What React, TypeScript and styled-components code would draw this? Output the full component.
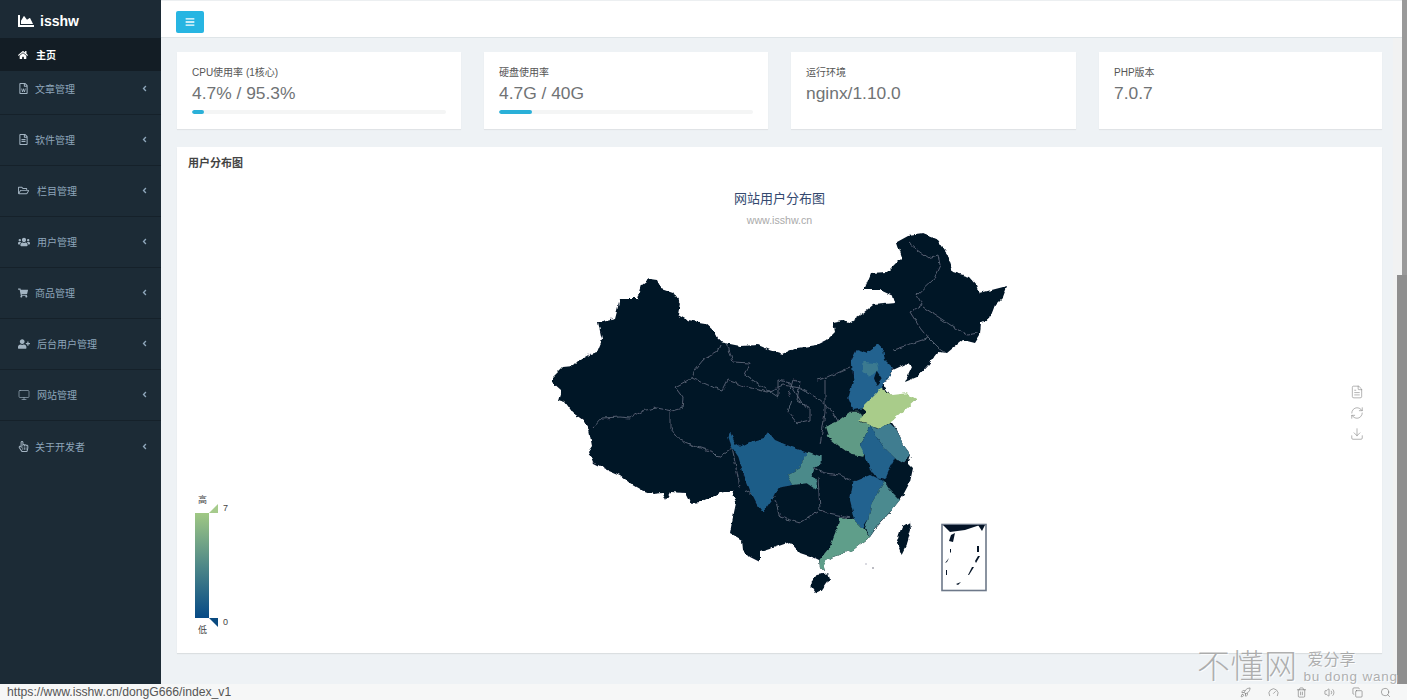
import React from 'react';
import styled, { createGlobalStyle } from 'styled-components';
import {
  FaAngleLeft,
  FaBars,
  FaChartArea,
  FaHome,
  FaRegFileAlt,
  FaRegFileWord,
  FaRegFolderOpen,
  FaRegHandPointer,
  FaShoppingCart,
  FaUserPlus,
  FaUsers,
} from 'react-icons/fa';
import {
  Copy,
  Download,
  FileText,
  Gauge,
  Monitor,
  RefreshCw,
  Rocket,
  Search,
  Trash2,
  Volume2,
} from 'lucide-react';

const GlobalStyle = createGlobalStyle`
  html, body {
    margin: 0;
    padding: 0;
    overflow: hidden;
    background: #eef2f5;
    font-family: "Liberation Sans", "Noto Sans CJK SC", sans-serif;
  }
`;

const Page = styled.div`
  position: relative;
  width: 1407px;
  height: 700px;
  display: flex;
  flex-direction: column;
  overflow: hidden;
`;

const Body = styled.div`
  height: 684px;
  display: flex;
`;

const Sidebar = styled.aside`
  width: 161px;
  flex-shrink: 0;
  background: #1c2b36;
`;

const Brand = styled.div`
  height: 38px;
  box-sizing: border-box;
  padding: 3px 0 0 18px;
  display: flex;
  align-items: center;
  gap: 6px;
  color: #fff;
  font-size: 14px;
  font-weight: bold;
  background: #1c2a35;
`;

const HomeItem = styled.div`
  height: 33px;
  padding-left: 18px;
  display: flex;
  align-items: center;
  gap: 8px;
  background: #131d25;
  color: #fff;
  font-size: 10px;
  font-weight: bold;
`;

const MenuItem = styled.div<{ $last?: boolean }>`
  height: 51px;
  box-sizing: border-box;
  padding: 0 12px 1px 18px;
  display: flex;
  align-items: center;
  color: #8ea6ba;
  font-size: 10px;
  border-bottom: ${(p) => (p.$last ? 'none' : '1px solid #15212a')};

  &:first-of-type {
    height: 44px;
    padding-bottom: 8px;
  }
`;

const MenuIcon = styled.span<{ $width: number }>`
  width: ${(p) => p.$width}px;
  flex-shrink: 0;
  display: flex;
  align-items: center;
  color: #a3b4c2;
`;

const MenuLabel = styled.span`
  flex: 1;
`;

const Main = styled.main`
  flex: 1;
  display: flex;
  flex-direction: column;
  min-width: 0;
`;

const TopBar = styled.header`
  height: 38px;
  box-sizing: border-box;
  padding: 5px 0 0 15px;
  display: flex;
  align-items: center;
  background: #fff;
  border-top: 1px solid #eceff1;
  border-bottom: 1px solid #dfe5e8;
`;

const MenuButton = styled.button`
  width: 28px;
  height: 22px;
  padding: 0;
  border: none;
  border-radius: 2px;
  display: flex;
  align-items: center;
  justify-content: center;
  background: #27b5e2;
  color: #fff;
`;

const Content = styled.div`
  flex: 1;
  padding: 14px 20px 0 16px;
  display: flex;
  flex-direction: column;
  gap: 18px;
`;

const StatGrid = styled.div`
  display: grid;
  grid-template-columns: 284px 284px 285px 283px;
  gap: 23px;
`;

const StatCard = styled.section`
  height: 77px;
  box-sizing: border-box;
  padding: 14px 15px 0;
  background: #fff;
  box-shadow: 0 1px 1px rgba(0, 0, 0, 0.06);
`;

const StatTitle = styled.div`
  font-size: 10px;
  line-height: 13px;
  color: #555;
`;

const StatValue = styled.div`
  margin-top: 3px;
  font-size: 17.4px;
  line-height: 22px;
  color: #707375;
`;

const Progress = styled.div`
  margin-top: 6px;
  width: 254px;
  height: 4px;
  border-radius: 2px;
  background: #f4f5f5;
  overflow: hidden;
`;

const ProgressFill = styled.div`
  height: 100%;
  border-radius: 2px;
  background: #2ab0d8;
`;

const MapCard = styled.section`
  position: relative;
  height: 506px;
  box-sizing: border-box;
  padding: 9px 11px 0;
  background: #fff;
  box-shadow: 0 1px 1px rgba(0, 0, 0, 0.08);
`;

const CardHeading = styled.h2`
  margin: 0;
  font-size: 11px;
  line-height: 14px;
  font-weight: bold;
  color: #444;
`;

const ChartTitle = styled.div`
  margin-top: 20px;
  text-align: center;
  font-size: 13px;
  line-height: 18px;
  color: #34496f;
`;

const ChartSubtitle = styled.div`
  margin-top: 6px;
  text-align: center;
  font-size: 10.6px;
  line-height: 12px;
  color: #aaa;
`;

const MapSvg = styled.svg`
  position: absolute;
  left: 363px;
  top: 78px;
`;

const LegendBar = styled.div`
  position: absolute;
  left: 18px;
  top: 366px;
  width: 14px;
  height: 105px;
  background: linear-gradient(#a0c884, #4c8688 52%, #064a86);
`;

const LegendHandle = styled.svg<{ $top: number }>`
  position: absolute;
  left: 32px;
  top: ${(p) => p.$top}px;
`;

const LegendText = styled.span<{ $left: number; $top: number }>`
  position: absolute;
  left: ${(p) => p.$left}px;
  top: ${(p) => p.$top}px;
  font-size: 9px;
  line-height: 12px;
  color: #444;
`;

const Toolbox = styled.div`
  position: absolute;
  left: 1173px;
  top: 238px;
  display: flex;
  flex-direction: column;
  gap: 7px;
  color: #7f7f7f;
`;

const ScrollRail = styled.div`
  width: 5px;
  flex-shrink: 0;
  background: #9a9a9a;
`;

const ScrollTrack = styled.div`
  position: absolute;
  left: 1393px;
  top: 38px;
  width: 9px;
  height: 646px;
  background: #f1f2f2;
`;

const ScrollThumb = styled.div`
  position: absolute;
  left: 1397px;
  top: 275px;
  width: 10px;
  height: 409px;
  background: #8f8f8f;
`;

const StatusBar = styled.footer`
  height: 16px;
  position: relative;
  z-index: 2;
  padding: 0 16px 0 7px;
  display: flex;
  align-items: center;
  justify-content: space-between;
  background: #f6f7f7;
  color: #555;
  font-size: 12.2px;
`;

const StatusIcons = styled.div`
  display: flex;
  gap: 17px;
  color: #666;
`;

const Watermark = styled.div`
  position: absolute;
  left: 1197px;
  top: 647px;
  width: 205px;
  z-index: 3;
  display: flex;
  gap: 6px;
  color: rgba(150, 150, 150, 0.75);
  text-shadow: 1px 1px 0 rgba(255, 255, 255, 0.8);
  pointer-events: none;
`;

const WatermarkMain = styled.span`
  flex-shrink: 0;
  font-size: 33px;
  line-height: 40px;
  font-weight: 300;
  letter-spacing: 0.5px;
  white-space: nowrap;
`;

const WatermarkSide = styled.div`
  display: flex;
  flex-direction: column;
  padding-top: 4px;
`;

const WatermarkSlogan = styled.span`
  font-size: 16px;
  line-height: 18px;
  padding-left: 4px;
  white-space: nowrap;
`;

const WatermarkPinyin = styled.span`
  font-size: 13.5px;
  line-height: 15px;
  letter-spacing: 0.8px;
  white-space: nowrap;
`;

const menu = [
  { label: '文章管理', icon: <FaRegFileWord size={11} />, width: 17 },
  { label: '软件管理', icon: <FaRegFileAlt size={11} />, width: 17 },
  { label: '栏目管理', icon: <FaRegFolderOpen size={11} />, width: 19 },
  { label: '用户管理', icon: <FaUsers size={12} />, width: 19 },
  { label: '商品管理', icon: <FaShoppingCart size={10} />, width: 17 },
  { label: '后台用户管理', icon: <FaUserPlus size={12} />, width: 19 },
  { label: '网站管理', icon: <Monitor size={12} strokeWidth={1.3} />, width: 19 },
  { label: '关于开发者', icon: <FaRegHandPointer size={11} />, width: 17 },
];

const stats = [
  { title: 'CPU使用率 (1核心)', value: '4.7% / 95.3%', fill: 12 },
  { title: '硬盘使用率', value: '4.7G / 40G', fill: 33 },
  { title: '运行环境', value: 'nginx/1.10.0' },
  { title: 'PHP版本', value: '7.0.7' },
];

const OUTLINE =
  '552,378 563,367 573,366 578,361 590,354 597,352 602,340 598,322 615,318 620,299 638,299 642,285 650,279 657,280 661,288 673,292 680,303 678,315 687,320 705,323 715,332 720,342 740,346 758,345 770,350 783,354 797,348 817,345 827,340 835,332 833,322 843,320 848,323 863,313 873,305 895,303 893,296 880,290 864,290 871,273 887,272 902,257 897,242 908,236 923,234 938,240 947,253 953,272 970,277 977,285 980,293 1007,286 1003,297 995,305 990,318 981,322 980,335 975,343 963,340 953,348 947,353 938,352 928,365 917,377 905,382 912,367 908,363 893,370 887,380 882,382 887,390 892,397 907,395 916,400 903,408 890,420 897,430 905,447 911,455 908,463 913,468 910,482 902,497 892,510 877,527 870,537 853,550 833,557 823,563 825,572 820,567 819,560 815,558 800,553 790,542 773,548 760,552 760,562 750,557 743,550 742,540 730,533 732,522 736,503 732,490 720,493 700,502 690,503 685,493 670,492 666,500 663,493 653,494 642,490 630,483 620,475 608,470 598,465 592,462 588,452 592,446 589,430 583,420 573,413 565,402 558,400 561,390 552,382';

// provinces that carry a value, traced at 3x with the origin at (700, 340)
const provinces = [
  { fill: '#1f5d88', points: '90,275 105,310 120,320 150,305 190,295 205,275 225,300 260,315 300,330 325,340 310,360 300,385 262,405 280,435 250,440 232,445 215,480 190,515 170,490 150,450 130,400 115,350 95,320 85,290' },
  { fill: '#4b8a8a', points: '325,335 365,350 365,370 340,385 335,405 350,425 350,450 320,430 280,435 262,405 300,385 310,360' },
  { fill: '#5f9a85', points: '450,215 480,215 490,235 480,245 510,255 490,300 480,315 495,335 490,350 455,345 420,320 385,290 375,260 410,245' },
  { fill: '#21628f', points: '470,30 500,40 535,15 550,30 555,60 580,85 565,115 545,130 548,148 490,205 460,210 445,175 460,120 455,60' },
  { fill: '#3a7a90', points: '490,65 530,70 535,90 510,110 490,95' },
  { fill: '#051427', points: '530,92 545,115 530,135 522,115' },
  { fill: '#a9cc8a', points: '545,145 575,165 620,160 650,178 615,210 580,240 545,265 510,255 478,242 497,215 485,205' },
  { fill: '#3f7d90', points: '510,255 540,265 570,250 590,270 615,320 632,345 610,370 585,355 550,320 530,290' },
  { fill: '#22628c', points: '510,255 530,290 550,320 585,355 570,385 555,420 530,415 510,385 490,335 480,315 490,300' },
  { fill: '#21628f', points: '510,405 530,415 552,425 515,490 505,540 490,565 465,540 450,480 460,425' },
  { fill: '#4b8a8f', points: '570,450 600,480 575,510 530,560 510,590 495,565 505,540 515,490 552,425' },
  { fill: '#5f9e8a', points: '420,535 465,540 490,565 510,590 460,630 400,650 370,670 375,695 360,680 358,660 390,620 410,570' },
];

const islands = [
  '335,725 350,705 385,700 390,715 365,750 345,760 335,745',
  '605,560 630,545 633,570 620,615 605,645 590,605',
];

const borders = [
  '720,345 717,352 703,360 695,370 692,378 675,387 683,398 682,408 672,411',
  '672,411 657,408 645,410 630,418 620,417 602,418 593,428',
  '670,412 670,428 680,440 697,447 713,452 718,457 732,448 740,487',
  '692,378 707,385 722,390 727,380 747,387 767,392 783,385 800,388 817,398 833,412 840,425 830,430',
  '727,343 733,362 750,363 745,375 763,387 778,397 778,380 790,383 800,400 808,410',
  '788,397 793,380 800,382 797,400 810,408 810,420 797,423 788,412 792,400',
  '817,380 827,377 850,367',
  '825,380 825,413 820,445',
  '813,468 825,473 840,475 850,480',
  '818,477 820,510 828,513 850,517 840,518',
  '775,500 780,517 800,523 818,512',
  '745,490 760,500 775,497',
  '908,242 917,250 928,258 938,255 940,265 933,280 917,295 922,305 910,312 920,328 928,338 893,350',
  '923,307 940,318 955,328 967,335 978,333',
  '928,338 938,348 945,353',
];

const MapDrawing: React.FC = () => (
  <MapSvg width="480" height="380" viewBox="540 225 480 380">
    <defs>
      {/* roughens the hand traced coast and province lines */}
      <filter id="rough" x="-5%" y="-5%" width="110%" height="110%">
        <feTurbulence type="fractalNoise" baseFrequency="0.16" numOctaves="2" seed="4" />
        <feDisplacementMap in="SourceGraphic" scale="4.5" xChannelSelector="R" yChannelSelector="G" />
      </filter>
    </defs>
    <g filter="url(#rough)">
      <polygon points={OUTLINE} fill="#051427" />
      <g fill="none" stroke="#5a6877" strokeWidth="0.9">
        {borders.map((b) => (
          <polyline key={b} points={b} />
        ))}
      </g>
      <g transform="translate(700 340) scale(0.3333)">
        {provinces.map((p) => (
          <polygon key={p.points} points={p.points} fill={p.fill} />
        ))}
        {islands.map((p) => (
          <polygon key={p} points={p} fill="#051427" />
        ))}
      </g>
    </g>
    <rect x="942" y="524.5" width="44" height="66" fill="#fff" stroke="#6d7889" strokeWidth="1.6" />
    <g fill="#051427">
      <polygon points="943,525 980,525 965,530 950,532" />
      <polygon points="978,525 985,525 982,531" />
      <polygon points="951,535 955,533 953,542 949,541" />
      <polygon points="977,546 979,546 979,552 977,552" />
      <polygon points="978,556 980,556 976,563 975,561" />
      <polygon points="947,562 949,558 945,563" />
      <polygon points="946,570 947,570 947,575 946,575" />
      <polygon points="972,567 974,567 969,575 968,575" />
      <polygon points="956,584 961,582 958,585" />
      <polygon points="950,549 951,549 951,553 950,552" />
    </g>
    <circle cx="866" cy="564" r="0.8" fill="#aab" />
    <circle cx="873" cy="568" r="0.8" fill="#667" />
  </MapSvg>
);

const App: React.FC = () => {
  return (
    <Page>
      <GlobalStyle />
      <Body>
        <Sidebar>
          <Brand>
            <FaChartArea size={16} />
            isshw
          </Brand>
          <HomeItem>
            <FaHome size={10} />
            主页
          </HomeItem>
          <div>
            {menu.map((item, i) => (
              <MenuItem key={item.label} $last={i === menu.length - 1}>
                <MenuIcon $width={item.width}>{item.icon}</MenuIcon>
                <MenuLabel>{item.label}</MenuLabel>
                <FaAngleLeft size={9} />
              </MenuItem>
            ))}
          </div>
        </Sidebar>
        <Main>
          <TopBar>
            <MenuButton>
              <FaBars size={10} />
            </MenuButton>
          </TopBar>
          <Content>
            <StatGrid>
              {stats.map((s) => (
                <StatCard key={s.title}>
                  <StatTitle>{s.title}</StatTitle>
                  <StatValue>{s.value}</StatValue>
                  {s.fill !== undefined && (
                    <Progress>
                      <ProgressFill style={{ width: s.fill }} />
                    </Progress>
                  )}
                </StatCard>
              ))}
            </StatGrid>
            <MapCard>
              <CardHeading>用户分布图</CardHeading>
              <ChartTitle>网站用户分布图</ChartTitle>
              <ChartSubtitle>www.isshw.cn</ChartSubtitle>
              <MapDrawing />
              <LegendText $left={21} $top={347}>高</LegendText>
              <LegendHandle $top={357} width="9" height="9">
                <polygon points="0,9 9,9 9,0" fill="#a6cb8c" />
              </LegendHandle>
              <LegendText $left={46} $top={355}>7</LegendText>
              <LegendBar />
              <LegendHandle $top={471} width="9" height="9">
                <polygon points="0,0 9,0 9,9" fill="#0a4a80" />
              </LegendHandle>
              <LegendText $left={46} $top={469}>0</LegendText>
              <LegendText $left={21} $top={477}>低</LegendText>
              <Toolbox>
                <FileText size={14} strokeWidth={1} />
                <RefreshCw size={14} strokeWidth={1} />
                <Download size={14} strokeWidth={1} />
              </Toolbox>
            </MapCard>
          </Content>
        </Main>
        <ScrollRail />
      </Body>
      <ScrollTrack />
      <ScrollThumb />
      <StatusBar>
        <span>https://www.isshw.cn/dongG666/index_v1</span>
        <StatusIcons>
          <Rocket size={11} strokeWidth={1.2} />
          <Gauge size={11} strokeWidth={1.2} />
          <Trash2 size={11} strokeWidth={1.2} />
          <Volume2 size={11} strokeWidth={1.2} />
          <Copy size={11} strokeWidth={1.2} />
          <Search size={11} strokeWidth={1.2} />
        </StatusIcons>
      </StatusBar>
      <Watermark>
        <WatermarkMain>不懂网</WatermarkMain>
        <WatermarkSide>
          <WatermarkSlogan>爱分享</WatermarkSlogan>
          <WatermarkPinyin>bu dong wang</WatermarkPinyin>
        </WatermarkSide>
      </Watermark>
    </Page>
  );
};

export default App;
